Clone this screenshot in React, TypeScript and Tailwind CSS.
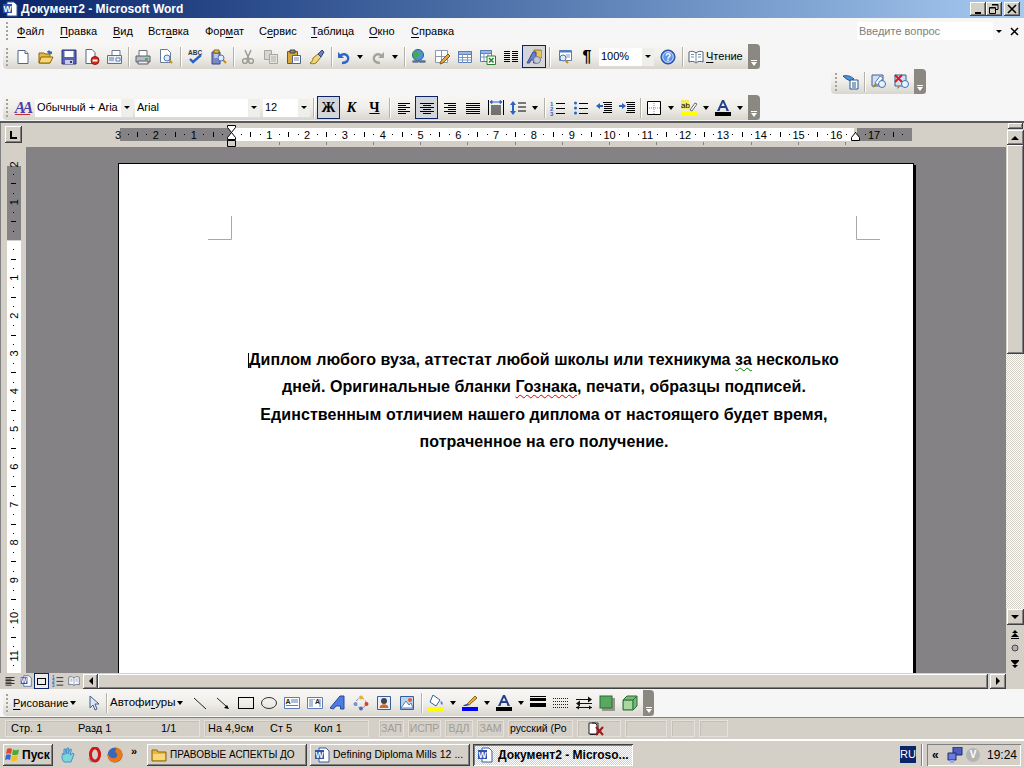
import type { ReactNode } from "react";

const raised =
  "shadow-[inset_-1px_-1px_0_#404040,inset_1px_1px_0_#ffffff,inset_-2px_-2px_0_#808080]";
const sunken =
  "shadow-[inset_1px_1px_0_#808080,inset_-1px_-1px_0_#ffffff]";
const checker =
  "bg-[repeating-conic-gradient(#ffffff_0_25%,#d4d0c8_0_50%)] bg-[length:2px_2px]";
const bar = "bg-gradient-to-b from-[#f8f7f5] via-[#efeeea] to-[#d9d6cf]";

function Ico({ children }: { children: ReactNode }) {
  return (
    <svg width="16" height="16" viewBox="0 0 16 16" className="block shrink-0">
      {children}
    </svg>
  );
}

function Lines({ rows }: { rows: [number, number, number][] }) {
  return (
    <Ico>
      {rows.map(([y, x, w], i) => (
        <rect key={i} x={x} y={y} width={w} height="1" fill="#000" />
      ))}
    </Ico>
  );
}

function Lens({ x = 10, y = 10 }: { x?: number; y?: number }) {
  return (
    <>
      <path d={`M${x + 2} ${y + 2}l3 3`} stroke="#c98a20" strokeWidth="2" />
      <circle cx={x} cy={y} r="3" fill="#dcecfb" stroke="#4a78b8" />
    </>
  );
}

const icons: Record<string, ReactNode> = {
  new: (
    <Ico>
      <path d="M3 1.5h7l3 3v10H3z" fill="#fff" stroke="#54658c" />
      <path d="M10 1.5v3h3" fill="#dfe6f2" stroke="#54658c" />
    </Ico>
  ),
  open: (
    <Ico>
      <path d="M1 4h5l1 1h5v9H1z" fill="#e8b840" stroke="#8a6410" />
      <path d="M3 8h12l-3 6H1z" fill="#f8d870" stroke="#8a6410" />
      <path d="M9 3c1-2 3-2 4 0l1-1v3h-3z" fill="#3a6cc0" />
    </Ico>
  ),
  save: (
    <Ico>
      <path d="M1 1h14v14H1z" fill="#5a62b4" stroke="#2e3478" />
      <path d="M3.5 2h9v6h-9z" fill="#fff" />
      <path d="M4 11h8v4H4z" fill="#c9cce8" />
      <path d="M9 12h2v2H9z" fill="#2e3478" />
    </Ico>
  ),
  perm: (
    <Ico>
      <path d="M2 .5h6l3 3v11H2z" fill="#fff" stroke="#54658c" />
      <circle cx="11" cy="11.5" r="4" fill="#d8281c" stroke="#8c1810" />
      <path d="M8.5 10.5h5v2h-5z" fill="#fff" />
    </Ico>
  ),
  mail: (
    <Ico>
      <path d="M5 1.5h8v5H5z" fill="#fff" stroke="#6b7b96" />
      <path d="M.5 6.5h14v8H.5z" fill="#e8edf4" stroke="#5f708c" />
      <path d="M2 9h5M2 11h5M9 9h4v3H9z" stroke="#5a7cb4" fill="#fff" />
    </Ico>
  ),
  print: (
    <Ico>
      <path d="M4 1.5h8v6H4z" fill="#fff" stroke="#6b7280" />
      <path d="M1 7h14v6H1z" fill="#b8bcc4" stroke="#59606c" />
      <path d="M3 12h10v3H3z" fill="#e8e8e8" stroke="#59606c" />
      <rect x="10" y="9" width="3" height="2" fill="#28c838" />
    </Ico>
  ),
  preview: (
    <Ico>
      <path d="M2.5 .5h7l3 3v10h-10z" fill="#fff" stroke="#6b7b96" />
      <Lens x={9} y={9} />
    </Ico>
  ),
  spell: (
    <Ico>
      <text x="0" y="5.5" fontSize="6.5" fontWeight="700" fontFamily="Liberation Sans, sans-serif" fill="#333">ABC</text>
      <path d="M2 10l3 3 8-7" fill="none" stroke="#2a62c8" strokeWidth="2.4" />
    </Ico>
  ),
  research: (
    <Ico>
      <path d="M1 3h8v12H1z" fill="#7a88c8" stroke="#3c4688" />
      <path d="M3 1h5v3H3z" fill="#e8c050" stroke="#806010" />
      <path d="M3 6h4M3 8h4" stroke="#fff" />
      <Lens x={10} y={9} />
    </Ico>
  ),
  cut: (
    <Ico>
      <path d="M5 1l4 9M11 1L7 10" stroke="#9a9a94" strokeWidth="1.5" fill="none" />
      <circle cx="5" cy="12" r="2.4" fill="none" stroke="#9a9a94" strokeWidth="1.4" />
      <circle cx="11" cy="12" r="2.4" fill="none" stroke="#9a9a94" strokeWidth="1.4" />
    </Ico>
  ),
  copy: (
    <Ico>
      <path d="M1.5 1.5h7v9h-7z" fill="#d8d6d0" stroke="#a8a6a0" />
      <path d="M6.5 5.5h8v9h-8z" fill="#e4e2dc" stroke="#a8a6a0" />
      <path d="M8 8h5M8 10h5M8 12h5" stroke="#b4b2ac" />
    </Ico>
  ),
  paste: (
    <Ico>
      <path d="M1.5 2.5h10v12h-10z" fill="#d8a838" stroke="#7c5810" />
      <path d="M4 1h5v3H4z" fill="#888" stroke="#444" />
      <path d="M6.5 6.5h8v8h-8z" fill="#fff" stroke="#54658c" />
      <path d="M8 9h5M8 11h5" stroke="#7488b0" />
    </Ico>
  ),
  brush: (
    <Ico>
      <path d="M9 5l3 3-5 6c-2 1-5 1-6 0 2-1 3-3 3-5z" fill="#f0d878" stroke="#8c7420" />
      <path d="M9 5l4-4 2 2-3 5z" fill="#6a7cc0" stroke="#38487c" />
    </Ico>
  ),
  undo: (
    <Ico>
      <path d="M6 14c5 0 7-3 6-6s-5-4-8-1" fill="none" stroke="#2f64c8" strokeWidth="2.4" />
      <path d="M2 3v6h6z" fill="#2f64c8" />
    </Ico>
  ),
  redo: (
    <Ico>
      <path d="M10 14c-5 0-7-3-6-6s5-4 8-1" fill="none" stroke="#a4a39e" strokeWidth="2.4" />
      <path d="M14 3v6H8z" fill="#a4a39e" />
    </Ico>
  ),
  link: (
    <Ico>
      <circle cx="7" cy="6" r="5.5" fill="#4c94d8" stroke="#2a5c98" />
      <path d="M4 2c2 0 3 1 4 3s-2 3-3 5c-2-1-3-3-3-4s1-3 2-4zM9 2l2 2-1 2z" fill="#3fae48" />
      <path d="M2.5 12.5h4M9 12.5h4.5" stroke="#5f6f8f" strokeWidth="2.6" strokeLinecap="round" fill="none" />
    </Ico>
  ),
  tb: (
    <Ico>
      <path d="M1.5 1.5h12v12h-12zM1.5 7.5h12M7.5 1.5v12" fill="#fff" stroke="#8c98ac" />
      <path d="M6 15l1-3 7-7 2 2-7 7z" fill="#e8a838" stroke="#8a5c10" />
    </Ico>
  ),
  table: (
    <Ico>
      <path d="M1.5 2.5h13v11h-13z" fill="#fff" stroke="#5c7cb8" />
      <path d="M1.5 2.5h13v3h-13z" fill="#9cb6e0" stroke="#5c7cb8" />
      <path d="M1.5 8.5h13M1.5 11h13M5.5 5v9M10.5 5v9" stroke="#7c98c8" />
    </Ico>
  ),
  excel: (
    <Ico>
      <path d="M.5 1.5h11v11H.5z" fill="#fff" stroke="#5c7cb8" />
      <path d="M.5 1.5h11v3H.5z" fill="#9cb6e0" stroke="#5c7cb8" />
      <path d="M4 4v8M8 4v8M1 8h10" stroke="#7c98c8" />
      <path d="M7 7h8.5v8.5H7z" fill="#fff" stroke="#2c7c30" />
      <path d="M9 9l4.500 4.500M13.500 9L9 13.500" stroke="#1c8c28" strokeWidth="1.600" />
    </Ico>
  ),
  cols: <Lines rows={[[2, 1, 6], [4, 1, 6], [6, 1, 6], [8, 1, 6], [10, 1, 6], [12, 1, 6], [2, 9, 6], [4, 9, 6], [6, 9, 6], [8, 9, 6], [10, 9, 6], [12, 9, 6]]} />,
  drawing: (
    <Ico>
      <path d="M8 1h6l2 1v6l-2 2H8z" fill="#e8c458" stroke="#94781c" />
      <path d="M1 14L7 3h3v11H7.500V11H5l-1.500 3z" fill="#6a7cd0" stroke="#39488c" />
      <circle cx="11" cy="11" r="3.500" fill="#c4c8d8" stroke="#777e98" />
    </Ico>
  ),
  docmap: (
    <Ico>
      <path d="M2.500 1.500h12v10h-12z" fill="#fff" stroke="#5c7cb8" />
      <path d="M2.500 1.500h12v2h-12z" fill="#4c7cc8" />
      <path d="M9 6h4M9 8h4" stroke="#7c98c8" />
      <Lens x={6} y={9} />
    </Ico>
  ),
  help: (
    <Ico>
      <circle cx="8" cy="8" r="7" fill="#3a74d8" stroke="#1c3c90" />
      <circle cx="8" cy="8" r="5.300" fill="#5a94ec" stroke="#d4e4fc" />
      <text x="8" y="11.500" textAnchor="middle" fontSize="10" fontWeight="700" fontFamily="Liberation Sans, sans-serif" fill="#fff">?</text>
    </Ico>
  ),
  book: (
    <Ico>
      <path d="M8 4C6 2 3 2 1 3v10c2-1 5-1 7 1 2-2 5-2 7-1V3c-2-1-5-1-7 1z" fill="#fff" stroke="#4c5c78" />
      <path d="M8 4v10M3 5.500h3M3 8h3M10 5.500h3M10 8h3" stroke="#7488a8" />
    </Ico>
  ),
  aleft: <Lines rows={[[3, 2, 12], [5, 2, 8], [7, 2, 12], [9, 2, 8], [11, 2, 12], [13, 2, 8]]} />,
  acenter: <Lines rows={[[3, 1, 14], [5, 4, 8], [7, 1, 14], [9, 4, 8], [11, 1, 14], [13, 4, 8]]} />,
  aright: <Lines rows={[[3, 2, 12], [5, 6, 8], [7, 2, 12], [9, 6, 8], [11, 2, 12], [13, 6, 8]]} />,
  ajust: <Lines rows={[[3, 1, 14], [5, 1, 14], [7, 1, 14], [9, 1, 14], [11, 1, 14], [13, 1, 14]]} />,
  adist: (
    <Ico>
      <path d="M.5 0v15M15.500 0v15" stroke="#000" />
      <path d="M2 2h12M2 2l2-1.500v3zM14 2l-2-1.500v3z" stroke="#2a62c8" fill="#2a62c8" />
      <path d="M3 6h10M3 8h10M3 10h10M3 12h10M3 14h10" stroke="#000" />
    </Ico>
  ),
  spacing: (
    <Ico>
      <path d="M3 1l3 4H4v6h2l-3 4-3-4h2V5H0z" fill="#2a62c8" />
      <path d="M8 3h8M8 7h8M8 11h8" stroke="#000" />
    </Ico>
  ),
  num: (
    <Ico>
      <text x="0" y="5.500" fontSize="6" fontWeight="700" fontFamily="Liberation Sans, sans-serif" fill="#2a62c8">1</text>
      <text x="0" y="10.500" fontSize="6" fontWeight="700" fontFamily="Liberation Sans, sans-serif" fill="#2a62c8">2</text>
      <text x="0" y="15.500" fontSize="6" fontWeight="700" fontFamily="Liberation Sans, sans-serif" fill="#2a62c8">3</text>
      <path d="M6 3.500h9M6 8.500h9M6 13.500h9" stroke="#000" />
    </Ico>
  ),
  bull: (
    <Ico>
      <circle cx="2.500" cy="3" r="1.500" fill="#2a62c8" />
      <circle cx="2.500" cy="8" r="1.500" fill="#2a62c8" />
      <circle cx="2.500" cy="13" r="1.500" fill="#2a62c8" />
      <path d="M6 3.500h9M6 8.500h9M6 13.500h9" stroke="#000" />
    </Ico>
  ),
  dec: (
    <Ico>
      <path d="M0 6l4-3v2h3v2H4v2z" fill="#2a62c8" />
      <path d="M7 2.500h9M8 4.500h8M8 6.500h8M8 8.500h8M8 10.500h8M7 12.500h9" stroke="#000" />
    </Ico>
  ),
  inc: (
    <Ico>
      <path d="M7 6L3 3v2H0v2h3v2z" fill="#2a62c8" />
      <path d="M7 2.500h9M8 4.500h8M8 6.500h8M8 8.500h8M8 10.500h8M7 12.500h9" stroke="#000" />
    </Ico>
  ),
  border: (
    <Ico>
      <path d="M1.500 1.500h13v13h-13z" fill="#fff" stroke="#000" />
      <path d="M8 3v11M3 8h11" stroke="#888" strokeDasharray="1 1" />
    </Ico>
  ),
  hl: (
    <Ico>
      <rect x="0" y="0" width="8" height="9" fill="#f4ec60" />
      <text x="0" y="8" fontSize="8" fontFamily="Liberation Sans, sans-serif" fill="#000">ab</text>
      <path d="M9 10l5-7 2 1-5 7z" fill="#fff" stroke="#666" />
      <rect x="0" y="12" width="16" height="4" fill="#ffff00" />
    </Ico>
  ),
  fcolor: (
    <Ico>
      <path d="M2 11L7 0h2l5 11h-2.500l-1-3H5.500l-1 3zM6.300 6h3.400L8 2.500z" fill="#24408c" />
      <rect x="0" y="12" width="16" height="4" fill="#000" />
    </Ico>
  ),
  toolA: (
    <Ico>
      <path d="M1 1h11v11H1z" fill="#cfe0f4" stroke="#34609c" />
      <path d="M4 9l5-7 3 2-5 7z" fill="#fff" stroke="#5c7cb8" />
      <path d="M4 9l-2 5 4-3z" fill="#b07820" />
      <circle cx="11" cy="10" r="3.500" fill="#eaf4ff" stroke="#3a70b4" />
    </Ico>
  ),
  toolB: (
    <Ico>
      <path d="M1 1h11v11H1z" fill="#cfe0f4" stroke="#34609c" />
      <path d="M1 1l7 7M8 1L1 8" stroke="#e01818" strokeWidth="2" />
      <path d="M4 12l-1 3 3-2z" fill="#b07820" />
      <circle cx="11" cy="10" r="3.500" fill="#eaf4ff" stroke="#3a70b4" />
    </Ico>
  ),
  toolC: (
    <Ico>
      <path d="M0 2c4-1 8 0 11 3l-3 2C5 6 3 5 0 2z" fill="#4c94d8" stroke="#24568f" />
      <path d="M7 6h8v9H7z" fill="#fff" stroke="#24568f" />
      <path d="M9 9h4M9 11h4M9 13h4" stroke="#24568f" />
    </Ico>
  ),
  pointer: (
    <Ico>
      <path d="M4 1v12l3-3 2 5 2-1-2-5h4z" fill="#dbe6f7" stroke="#465e8c" />
    </Ico>
  ),
  line: (
    <Ico>
      <path d="M2 3l12 11" stroke="#222" />
    </Ico>
  ),
  arrow: (
    <Ico>
      <path d="M2 3l9 8" stroke="#222" />
      <path d="M14 14l-5-1 3-3z" fill="#000" />
    </Ico>
  ),
  rect: (
    <Ico>
      <rect x=".5" y="2.500" width="15" height="11" fill="none" stroke="#000" />
    </Ico>
  ),
  oval: (
    <Ico>
      <ellipse cx="8" cy="8" rx="7.500" ry="5.500" fill="none" stroke="#333" />
    </Ico>
  ),
  textbox: (
    <Ico>
      <path d="M.5 2.500h15v11H.5z" fill="#fff" stroke="#5c7cb8" />
      <text x="1.500" y="9" fontSize="7" fontWeight="700" fontFamily="Liberation Sans, sans-serif" fill="#222">A</text>
      <path d="M7 5h7M7 7h7M2 10.500h12" stroke="#5c7cb8" />
    </Ico>
  ),
  vtext: (
    <Ico>
      <path d="M.5 2.500h15v11H.5z" fill="#fff" stroke="#5c7cb8" />
      <text x="8" y="9" fontSize="7" fontWeight="700" fontFamily="Liberation Sans, sans-serif" fill="#222">A</text>
      <path d="M3 4v8M5 4v8M7 4v1M13 4v8" stroke="#5c7cb8" />
    </Ico>
  ),
  wordart: (
    <Ico>
      <path d="M0 13L10 1h4v13h-3.500v-3H6l-2.500 3z" fill="#4c7ce0" stroke="#2448a0" />
    </Ico>
  ),
  diagram: (
    <Ico>
      <path d="M8 3a5 5 0 0 1 5 5 5 5 0 0 1-5 5 5 5 0 0 1-5-5 5 5 0 0 1 5-5z" fill="none" stroke="#888" strokeDasharray="3 2" />
      <circle cx="8" cy="2.500" r="2" fill="#e8b030" />
      <circle cx="13.500" cy="9" r="2" fill="#d84028" />
      <circle cx="8" cy="13.500" r="2" fill="#5a64c4" />
      <circle cx="2.500" cy="9" r="2" fill="#6c94d8" />
    </Ico>
  ),
  clip: (
    <Ico>
      <path d="M1.500 1.500h13v13h-13z" fill="#e8eefa" stroke="#34609c" />
      <circle cx="8" cy="6" r="3" fill="#444" />
      <path d="M3.500 13c0-5 9-5 9 0z" fill="#d06828" />
    </Ico>
  ),
  pic: (
    <Ico>
      <path d="M1.500 1.500h13v13h-13z" fill="#bcd4f0" stroke="#34609c" />
      <circle cx="11" cy="5" r="2" fill="#e85c30" />
      <path d="M2 13l5-7 3 4 2-2 2 5z" fill="#fff" stroke="#5c7cb8" />
    </Ico>
  ),
  fill: (
    <Ico>
      <path d="M5 0l7 5-4 6-6-4z" fill="#fff" stroke="#3c5c98" />
      <path d="M13 6c2 1 2 3 1 4-1-1-2-2-1-4z" fill="#3c78d8" />
      <rect x="0" y="12" width="16" height="4" fill="#ffff00" />
    </Ico>
  ),
  pen: (
    <Ico>
      <path d="M5 9L13 1l2 2-8 7z" fill="#e8b040" stroke="#8a6410" />
      <path d="M5 9c-2 0-3 1-4 2 2 0 5 0 6-1z" fill="#2a48c8" />
      <rect x="0" y="12" width="16" height="4" fill="#0000ff" />
    </Ico>
  ),
  lstyle: (
    <Ico>
      <rect x="0" y="3" width="16" height="3" fill="#000" />
      <rect x="0" y="8" width="16" height="4" fill="#000" />
      <rect x="0" y="1" width="16" height="1" fill="#000" />
    </Ico>
  ),
  dstyle: (
    <Ico>
      <path d="M0 3.500h16M0 6.500h16M0 9.500h16M0 12.500h16" stroke="#222" strokeDasharray="1 1" />
    </Ico>
  ),
  astyle: (
    <Ico>
      <path d="M0 4.500h13M3 8.500h13M0 12.500h16" stroke="#111" />
      <path d="M16 4.500l-4-3v6zM0 8.500l4-3v6zM0 12.500l3-2v4zM16 12.500l-3-2v4z" fill="#111" />
    </Ico>
  ),
  shadow: (
    <Ico>
      <rect x="3" y="3" width="13" height="13" fill="#98968e" />
      <rect x="1" y="1" width="12" height="12" fill="#58a860" stroke="#2c6c34" />
    </Ico>
  ),
  d3: (
    <Ico>
      <path d="M1 5l4-4h10v10l-4 4H1z" fill="#78b878" stroke="#2c6c34" />
      <path d="M1 5h10v10M11 5l4-4" fill="none" stroke="#2c6c34" />
      <path d="M2 6h8v8H2z" fill="#a8d8a0" />
    </Ico>
  ),
  word: (
    <Ico>
      <path d="M5 1h7l3 3v11H5z" fill="#fff" stroke="#3c5c98" />
      <path d="M1 3h9v9H1z" fill="#2c54b0" />
      <text x="5.500" y="10.500" textAnchor="middle" fontSize="8.500" fontWeight="700" fontFamily="Liberation Sans, sans-serif" fill="#fff">W</text>
    </Ico>
  ),
  folder: (
    <Ico>
      <path d="M1 3h5l1 2h8v9H1z" fill="#e8b838" stroke="#8a6410" />
      <path d="M2 7h12v6H2z" fill="#f8d878" />
    </Ico>
  ),
  flag: (
    <Ico>
      <path d="M2 2c2-1 3-1 5 0l-1 5c-2-1-3-1-5 0z" fill="#e04820" />
      <path d="M8 2.500c2 1 3 1 6 0l-1 5c-3 1-4 1-6 0z" fill="#50a830" />
      <path d="M1 8c2-1 3-1 5 0l-1 5c-2-1-3-1-5 0z" fill="#3868d0" />
      <path d="M7 8.500c2 1 3 1 6 0l-1 5c-3 1-4 1-6 0z" fill="#f0c020" />
    </Ico>
  ),
  hand: (
    <Ico>
      <path d="M4 15C1 11 2 8 3 6l1 2 0-6 1.500 0 .5 5 1-6 1.500 0L8 7l2-5 1.500 .5L10 8l3-2 1 1-3 8z" fill="#7cd8d8" stroke="#4c8cc8" />
    </Ico>
  ),
  opera: (
    <Ico>
      <path d="M2 12l3-3 3 4-3 3z" fill="#a8a8a8" />
      <ellipse cx="9" cy="7.500" rx="4.500" ry="6.500" fill="none" stroke="#d01818" strokeWidth="3" />
    </Ico>
  ),
  fox: (
    <Ico>
      <circle cx="8" cy="8" r="7.500" fill="#3868b8" />
      <path d="M8 .5c5 0 8 4 7.500 8S11 15.500 7 15.500 0 11 1 7c1 3 4 5 7 4s3-5 0-6c1-2 2-3 0-4.500z" fill="#e87818" />
    </Ico>
  ),
  net: (
    <Ico>
      <path d="M6 0h9v8H6z" fill="#4c5cc0" stroke="#1c2c70" />
      <path d="M1 6h8v7H1z" fill="#6c7cd8" stroke="#1c2c70" />
      <path d="M3 13h4v3H3z" fill="#9ca8e8" />
    </Ico>
  ),
  spellx: (
    <Ico>
      <path d="M1 2h6l2 2v9H1zM4 2h6v10" fill="#fff" stroke="#222" />
      <path d="M2 13.500h8" stroke="#222" />
      <path d="M8 6l7 8M15 6l-7 8" stroke="#a01818" strokeWidth="2" />
    </Ico>
  ),
};

function Btn({ name, w = "w-[23px]", active }: { name: string; w?: string; active?: boolean }) {
  return (
    <div
      className={`flex h-[23px] shrink-0 items-center justify-center ${w} ${
        active ? "border border-[#0a246a] bg-[#d4d5d8]" : ""
      }`}
    >
      {icons[name]}
    </div>
  );
}

function Sep({ w = "w-[6px]" }: { w?: string }) {
  return (
    <div className={`flex h-[20px] shrink-0 justify-center ${w}`}>
      <div className="w-px bg-[#b4b1a8] shadow-[1px_0_0_#ffffff]" />
    </div>
  );
}

function Caret({ w = "w-[12px]" }: { w?: string }) {
  return (
    <div className={`flex h-[23px] shrink-0 items-center justify-center ${w}`}>
      <div className="h-0 w-0 border-x-[3.5px] border-t-[4px] border-x-transparent border-t-black" />
    </div>
  );
}

function Grip() {
  return (
    <div className="flex h-[19px] w-[6px] shrink-0 flex-col items-center justify-center gap-[2px]">
      {[0, 1, 2, 3, 4].map((i) => (
        <div key={i} className="h-[2px] w-[2px] bg-[#a5a299]" />
      ))}
    </div>
  );
}

function BarEnd({ w = "w-[12px]" }: { w?: string }) {
  return (
    <div className={`ml-auto flex h-full flex-col items-center justify-end rounded-r-[4px] bg-[#8a8880] pb-[3px] ${w}`}>
      <div className="mb-[1px] h-px w-[6px] bg-white" />
      <div className="h-0 w-0 border-x-[3px] border-t-[4px] border-x-transparent border-t-white" />
    </div>
  );
}

function Combo({ text, w }: { text: string; w: string }) {
  return (
    <div className={`flex h-[18px] shrink-0 items-center bg-white ${w}`}>
      <div className="min-w-0 flex-1 overflow-hidden whitespace-nowrap pl-[2px] text-[11px] text-black">{text}</div>
      <div className="flex h-full w-[12px] shrink-0 items-center justify-center bg-[#eeeeea]">
        <div className="h-0 w-0 border-x-[3px] border-t-[3px] border-x-transparent border-t-black" />
      </div>
    </div>
  );
}

const menu: [string, string, string, string][] = [
  ["", "Ф", "айл", "w-[43px]"],
  ["", "П", "равка", "w-[53px]"],
  ["", "В", "ид", "w-[35px]"],
  ["Вст", "а", "вка", "w-[57px]"],
  ["Фор", "м", "ат", "w-[54px]"],
  ["С", "е", "рвис", "w-[52px]"],
  ["", "Т", "аблица", "w-[58px]"],
  ["", "О", "кно", "w-[42px]"],
  ["", "С", "правка", "w-[60px]"],
];

function WinBtn({ children }: { children: ReactNode }) {
  return (
    <div className={`flex h-[14px] w-[16px] items-center justify-center bg-[#d4d0c8] ${raised}`}>
      {children}
    </div>
  );
}

function TitleBar() {
  return (
    <div className="flex h-[18px] items-center bg-gradient-to-r from-[#0a246a] to-[#a6caf0] px-[2px]">
      {icons.word}
      <span className="ml-[3px] text-[12px] font-bold text-white">Документ2 - Microsoft Word</span>
      <div className="ml-auto flex items-center">
        <WinBtn>
          <div className="mt-[7px] h-[2px] w-[6px] bg-black" />
        </WinBtn>
        <WinBtn>
          <svg width="10" height="10" viewBox="0 0 10 10">
            <path d="M3 .5h6v5H7M.5 3.500h6v6h-6z" fill="none" stroke="#000" />
            <path d="M3 1h6M1 4h5" stroke="#000" />
          </svg>
        </WinBtn>
        <div className="w-[2px]" />
        <WinBtn>
          <svg width="10" height="10" viewBox="0 0 10 10">
            <path d="M1 1l8 8M9 1L1 9" stroke="#000" strokeWidth="1.600" />
          </svg>
        </WinBtn>
        <div className="w-[2px]" />
      </div>
    </div>
  );
}

function MenuBar() {
  return (
    <div className="flex h-[26px] items-center pl-[4px] text-[11px] text-black">
      <Grip />
      <div className="w-[7px]" />
      {menu.map(([a, u, b, w]) => (
        <div key={u + b} className={`${w} shrink-0`}>
          {a}
          <span className="underline underline-offset-2">{u}</span>
          {b}
        </div>
      ))}
      <div className="ml-auto mr-[5px] flex h-[18px] w-[148px] items-center bg-white pl-[2px] text-[11px] text-[#808080]">
        Введите вопрос
        <div className="ml-auto flex h-full w-[12px] items-center justify-center bg-[#f6f6f6]">
          <div className="h-0 w-0 border-x-[3px] border-t-[3px] border-x-transparent border-t-black" />
        </div>
      </div>
      <svg width="9" height="9" viewBox="0 0 9 9" className="mr-[5px]">
        <path d="M1 1l7 7M8 1L1 8" stroke="#000" strokeWidth="1.500" />
      </svg>
    </div>
  );
}

function StandardBar() {
  return (
    <div className={`ml-[3px] flex h-[25px] w-[757px] items-center rounded-l-[4px] pl-[1px] ${bar}`}>
      <Grip />
      <div className="w-[1px]" />
      <Btn name="new" />
      <Btn name="open" />
      <Btn name="save" />
      <Btn name="perm" />
      <Btn name="mail" />
      <Sep w="w-[5px]" />
      <Btn name="print" />
      <Btn name="preview" />
      <Sep w="w-[7px]" />
      <Btn name="spell" />
      <Btn name="research" />
      <Sep />
      <Btn name="cut" />
      <Btn name="copy" />
      <Btn name="paste" />
      <Btn name="brush" />
      <Sep />
      <Btn name="undo" w="w-[20px]" />
      <Caret />
      <Btn name="redo" />
      <Caret />
      <Sep />
      <Btn name="link" />
      <Btn name="tb" />
      <Btn name="table" />
      <Btn name="excel" />
      <Btn name="cols" />
      <Btn name="drawing" w="w-[24px]" active />
      <Sep w="w-[7px]" />
      <Btn name="docmap" />
      <div className="flex h-[23px] w-[22px] shrink-0 items-center justify-center text-[16px] font-bold">¶</div>
      <div className="w-[1px]" />
      <Combo text="100%" w="w-[55px]" />
      <div className="w-[2px]" />
      <Btn name="help" />
      <Sep />
      <Btn name="book" w="w-[21px]" />
      <div className="w-[39px] shrink-0 text-[11px]">
        <span className="underline underline-offset-2">Ч</span>тение
      </div>
      <BarEnd />
    </div>
  );
}

function FloatingBar() {
  return (
    <div className="flex h-[26px] justify-end pr-[98px]">
      <div className={`flex h-[25px] w-[95px] items-center rounded-l-[4px] pl-[2px] ${bar}`}>
        <Grip />
        <Btn name="toolC" />
        <Sep w="w-[5px]" />
        <Btn name="toolA" />
        <Btn name="toolB" />
        <BarEnd />
      </div>
    </div>
  );
}

function FontBtn({ children, active, className }: { children: ReactNode; active?: boolean; className?: string }) {
  return (
    <div
      className={`flex h-[23px] w-[23px] shrink-0 items-center justify-center font-['Liberation_Serif',serif] text-[14px] font-bold ${
        active ? "border border-[#0a246a] bg-[#d4d5d8]" : ""
      } ${className ?? ""}`}
    >
      {children}
    </div>
  );
}

function FormatBar() {
  return (
    <div className={`ml-[3px] flex h-[25px] w-[757px] items-center rounded-l-[4px] pl-[1px] ${bar}`}>
      <Grip />
      <div className="w-[1px]" />
      <div className="flex h-[23px] w-[23px] shrink-0 items-center justify-center font-['Liberation_Serif',serif] text-[16px] font-bold italic leading-none tracking-[-3px] text-[#4c3ca8] underline decoration-[#c03030]">
        AA
      </div>
      <div className="w-[1px]" />
      <Combo text="Обычный + Aria" w="w-[98px]" />
      <div className="w-[2px]" />
      <Combo text="Arial" w="w-[125px]" />
      <div className="w-[3px]" />
      <Combo text="12" w="w-[47px]" />
      <Sep w="w-[7px]" />
      <FontBtn active>Ж</FontBtn>
      <FontBtn className="italic">К</FontBtn>
      <FontBtn className="underline">Ч</FontBtn>
      <Sep />
      <Btn name="aleft" />
      <Btn name="acenter" active />
      <Btn name="aright" />
      <Btn name="ajust" />
      <Btn name="adist" />
      <Btn name="spacing" w="w-[22px]" />
      <Caret />
      <Sep />
      <Btn name="num" w="w-[22px]" />
      <Btn name="bull" />
      <Btn name="dec" />
      <Btn name="inc" />
      <Sep w="w-[5px]" />
      <Btn name="border" w="w-[22px]" />
      <Caret />
      <Btn name="hl" />
      <Caret w="w-[11px]" />
      <Btn name="fcolor" />
      <Caret w="w-[11px]" />
      <BarEnd />
    </div>
  );
}

const CM = 37.8;

function HRuler() {
  const marks = [];
  for (let q = -12; q <= 71; q++) {
    const x = 231.5 + (q * CM) / 4;
    if (q % 4 === 0) {
      if (q !== 0)
        marks.push(
          <text key={q} x={x} y="139" textAnchor="middle" fontSize="11" fill="#000">
            {Math.abs(q / 4)}
          </text>,
        );
    } else if (Math.abs(q % 2) === 1) {
      marks.push(<rect key={q} x={Math.round(x)} y="134" width="1" height="1" fill="#000" />);
    } else {
      marks.push(<rect key={q} x={Math.round(x)} y="132" width="1" height="5" fill="#000" />);
    }
  }
  const tabs = [279, 326, 373, 420, 467, 515, 562, 609, 656, 703, 751, 798, 845];
  return (
    <svg width="1000" height="24" viewBox="0 123 1000 24" className="block shrink-0">
      <rect x="120" y="128" width="111" height="13" fill="#848284" />
      <rect x="231" y="128" width="623" height="13" fill="#fff" />
      <rect x="857" y="128" width="55" height="13" fill="#848284" />
      {marks}
      {tabs.map((x) => (
        <rect key={x} x={x} y="142" width="1" height="3" fill="#848284" />
      ))}
      <path d="M227.500 125.500h8v2l-4 5 4 5v2h-8v-2l4-5-4-5z" fill="#fff" stroke="#000" />
      <path d="M227.500 140.500h8v6h-8z" fill="#d4d0c8" stroke="#000" />
      <path d="M851.500 140.500v-3l4-5 4 5v3z" fill="#fff" stroke="#000" />
    </svg>
  );
}

function VRuler() {
  const marks = [];
  for (let q = -8; q <= 46; q++) {
    const y = 240 + (q * CM) / 4;
    if (q % 4 === 0) {
      if (q !== 0) {
        const label = Math.abs(q / 4);
        marks.push(
          <text key={q} x="14" y={y} textAnchor="middle" fontSize="11" fill="#000" transform={`rotate(-90 14 ${y}) translate(0 4)`}>
            {label}
          </text>,
        );
      }
    } else if (Math.abs(q % 2) === 1) {
      marks.push(<rect key={q} x="13" y={Math.round(y)} width="1" height="1" fill="#000" />);
    } else {
      marks.push(<rect key={q} x="11" y={Math.round(y)} width="5" height="1" fill="#000" />);
    }
  }
  return (
    <svg width="26" height="526" viewBox="0 147 26 526" className="block shrink-0">
      <rect x="7" y="166" width="14" height="74" fill="#848284" />
      <rect x="7" y="241" width="14" height="432" fill="#fff" />
      {marks}
    </svg>
  );
}

function VScroll() {
  return (
    <div className="flex h-[550px] w-[18px] shrink-0 flex-col items-center bg-[#d4d0c8]">
      <div className={`h-[6px] w-[15px] shrink-0 bg-[#d4d0c8] ${raised}`} />
      <div className={`mt-px flex h-[15px] w-[17px] shrink-0 items-center justify-center bg-[#d4d0c8] ${raised}`}>
        <div className="h-0 w-0 border-x-[4px] border-b-[4px] border-x-transparent border-b-black" />
      </div>
      <div className={`h-[209px] w-[17px] shrink-0 bg-[#d4d0c8] ${raised}`} />
      <div className={`h-[255px] w-[18px] shrink-0 ${checker}`} />
      <div className={`flex h-[16px] w-[17px] shrink-0 items-center justify-center bg-[#d4d0c8] ${raised}`}>
        <div className="h-0 w-0 border-x-[4px] border-t-[4px] border-x-transparent border-t-black" />
      </div>
      <svg width="18" height="48" viewBox="0 0 18 48" className="block shrink-0">
        <path d="M9 5l3 3H6zM9 8l4 4H5z" fill="#000" />
        <path d="M5 13.500h8" stroke="#000" />
        <circle cx="9" cy="23" r="3" fill="#b0aeb0" stroke="#444" />
        <path d="M5 35.500h8" stroke="#000" />
        <path d="M5 36h8l-4 4zM6 40h6l-3 3z" fill="#000" />
      </svg>
    </div>
  );
}

function Page() {
  return (
    <div className="relative h-[700px] w-[796px] border border-black bg-white pl-[113px] pr-[57px] pt-[182px] font-['Liberation_Sans',sans-serif] text-[16px] font-bold leading-[27.3px] tracking-[0.06px] text-black shadow-[2px_2px_0_#000]">
      <svg width="794" height="100" viewBox="119 164 794 100" className="absolute left-0 top-0">
        <path d="M231.500 216v23.500H208M856.500 216v23.500H880" fill="none" stroke="#a8a8a8" />
      </svg>
      <div className="flex flex-col items-center whitespace-nowrap">
        <div className="relative">
          <span className="absolute -left-px top-[7px] h-[15px] w-px bg-black" />
          Диплом любого вуза, аттестат любой школы или техникума{" "}
          <span className="underline decoration-[#008000] decoration-wavy decoration-1 underline-offset-2">за</span> несколько
        </div>
        <div>
          дней. Оригинальные бланки{" "}
          <span className="underline decoration-[#e00000] decoration-wavy decoration-1 underline-offset-2">Гознака</span>, печати, образцы подписей.
        </div>
        <div>Единственным отличием нашего диплома от настоящего будет время,</div>
        <div>потраченное на его получение.</div>
      </div>
    </div>
  );
}

function Workspace() {
  return (
    <div className="flex h-[526px] overflow-hidden">
      <div className="w-[26px] shrink-0 border-l border-[#808080] bg-[#d4d0c8]">
        <div className="-ml-px">
          <VRuler />
        </div>
      </div>
      <div className="min-w-0 flex-1 overflow-hidden bg-[#848284] pl-[92px] pt-4">
        <Page />
      </div>
      <div className="w-[18px] shrink-0" />
    </div>
  );
}

function Mini({ name, w }: { name: string; w: string }) {
  return (
    <div className={`flex h-[16px] items-center justify-center overflow-hidden ${w}`}>
      <div className="scale-75">{icons[name]}</div>
    </div>
  );
}

function HScroll() {
  return (
    <div className="flex h-[16px] items-center bg-[#d4d0c8] pl-[2px]">
      <div className="flex h-[16px] w-[81px] shrink-0 items-center">
        <Mini name="aleft" w="w-[16px]" />
        <Mini name="word" w="w-[16px]" />
        <div className="flex h-[16px] w-[15px] items-center justify-center border border-[#0a246a] bg-[#ececec]">
          <div className="h-[7px] w-[9px] border border-black" />
        </div>
        <Mini name="num" w="w-[17px]" />
        <Mini name="book" w="w-[15px]" />
      </div>
      <div className={`flex h-[15px] w-[15px] shrink-0 items-center justify-center ${raised}`}>
        <div className="h-0 w-0 border-y-[4px] border-r-[4px] border-y-transparent border-r-black" />
      </div>
      <div className={`h-[15px] w-[890px] shrink-0 ${raised}`} />
      <div className={`ml-[2px] flex h-[15px] w-[16px] shrink-0 items-center justify-center ${raised}`}>
        <div className="h-0 w-0 border-y-[4px] border-l-[4px] border-y-transparent border-l-black" />
      </div>
    </div>
  );
}

function DrawingBar() {
  return (
    <div className="h-[28px] bg-[#f6f6f6] pt-[1px]">
      <div className={`ml-[3px] flex h-[26px] w-[651px] items-center rounded-l-[4px] pl-[1px] ${bar}`}>
        <Grip />
        <div className="w-[3px]" />
        <div className="w-[54px] shrink-0 text-[11px]">
          <span className="underline underline-offset-2">Р</span>исование
        </div>
        <Caret w="w-[11px]" />
        <div className="w-[6px]" />
        <Btn name="pointer" w="w-[20px]" />
        <Sep w="w-[5px]" />
        <div className="ml-[1px] w-[65px] shrink-0 text-[11.5px]">
          Автофи<span className="underline underline-offset-2">г</span>уры
        </div>
        <Caret w="w-[10px]" />
        <div className="w-[3px]" />
        <Btn name="line" />
        <Btn name="arrow" />
        <Btn name="rect" />
        <Btn name="oval" />
        <Btn name="textbox" />
        <Btn name="vtext" />
        <Btn name="wordart" />
        <Btn name="diagram" />
        <Btn name="clip" />
        <Btn name="pic" />
        <Sep />
        <Btn name="fill" w="w-[24px]" />
        <Caret w="w-[10px]" />
        <Btn name="pen" />
        <Caret w="w-[11px]" />
        <Btn name="fcolor" />
        <Caret w="w-[11px]" />
        <Btn name="lstyle" />
        <Btn name="dstyle" />
        <Btn name="astyle" />
        <Btn name="shadow" />
        <Btn name="d3" />
        <BarEnd w="w-[11px]" />
      </div>
    </div>
  );
}

function Cell({ w, className, children }: { w: string; className?: string; children?: ReactNode }) {
  return (
    <div className={`flex h-[17px] shrink-0 items-center overflow-hidden whitespace-nowrap border border-[#e4e1da] shadow-[inset_1px_1px_0_#c4c0b8] ${w} ${className ?? ""}`}>
      {children}
    </div>
  );
}

function StatusBar() {
  return (
    <div className="flex h-[23px] items-center gap-[4px] border-y border-t-[#808080] border-b-white bg-[#d4d0c8] pl-[5px] text-[11px]">
      <Cell w="w-[195px]" className="pl-[5px]">
        <span className="w-[67px]">Стр. 1</span>
        <span className="w-[83px]">Разд 1</span>
        <span>1/1</span>
      </Cell>
      <Cell w="w-[165px]" className="pl-[3px]">
        <span className="w-[62px]">На 4,9см</span>
        <span className="w-[44px]">Ст 5</span>
        <span>Кол 1</span>
      </Cell>
      <div className="w-[2px]" />
      <Cell w="w-[25px]" className="justify-center text-[10.5px] text-[#a09d96]">ЗАП</Cell>
      <Cell w="w-[33px]" className="justify-center text-[10.5px] text-[#a09d96]">ИСПР</Cell>
      <Cell w="w-[28px]" className="justify-center text-[10.5px] text-[#a09d96]">ВДЛ</Cell>
      <Cell w="w-[27px]" className="justify-center text-[10.5px] text-[#a09d96]">ЗАМ</Cell>
      <Cell w="w-[65px]" className="pl-px text-[10.5px]">русский (Ро</Cell>
      <Cell w="w-[44px]" className="pl-[10px]">{icons.spellx}</Cell>
      <Cell w="w-[42px]" />
      <Cell w="w-[24px]" />
      <Cell w="w-[29px]" />
    </div>
  );
}

function TaskBtn({ icon, label, size, active }: { icon: string; label: string; size: string; active?: boolean }) {
  return (
    <div
      className={`flex h-[22px] w-[160px] shrink-0 items-center gap-[3px] pl-[4px] pr-[3px] ${size} ${
        active
          ? `font-bold ${checker} shadow-[inset_1px_1px_0_#404040,inset_-1px_-1px_0_#ffffff,inset_2px_2px_0_#808080]`
          : raised
      }`}
    >
      {icons[icon]}
      <span className={`min-w-0 whitespace-nowrap ${active ? "ml-[2px]" : ""}`}>{label}</span>
    </div>
  );
}

function Taskbar() {
  return (
    <div className="flex h-[28px] items-center border-t border-white bg-[#d4d0c8] pl-[3px] text-black">
      <div className={`flex h-[22px] w-[50px] shrink-0 items-center gap-[1px] pl-[2px] text-[12px] font-bold ${raised}`}>
        {icons.flag}
        Пуск
      </div>
      <div className="w-[7px]" />
      <div className="flex w-[71px] shrink-0 items-center">
        {icons.hand}
        <div className="w-[10px]" />
        {icons.opera}
        <div className="w-[5px]" />
        {icons.fox}
      </div>
      <div className="mb-[6px] w-[16px] shrink-0 text-[11px] font-bold">»</div>
      <TaskBtn icon="folder" size="text-[10px]" label="ПРАВОВЫЕ АСПЕКТЫ ДО" />
      <div className="w-[3px]" />
      <TaskBtn icon="word" size="text-[10.5px]" label="Defining Diploma Mills 12 ..." />
      <div className="w-[3px]" />
      <TaskBtn icon="word" size="text-[12px]" label="Документ2 - Microso..." active />
      <div className="ml-auto flex h-[17px] w-[16px] items-center justify-center bg-[#0a246a] text-[11px] text-white">RU</div>
      <div className="mx-[5px] h-[22px] w-px bg-[#808080] shadow-[1px_0_0_#ffffff]" />
      <div className={`mr-[3px] flex h-[22px] w-[94px] items-center pl-[5px] text-[12px] ${sunken}`}>
        <span className="w-[12px] font-bold">«</span>
        <div className="w-[3px]" />
        {icons.net}
        <div className="ml-[3px] flex h-[14px] w-[14px] items-center justify-center rounded-full bg-[#b4b4b4] text-[10px] font-bold text-white">V</div>
        <span className="ml-[7px]">19:24</span>
      </div>
    </div>
  );
}

export default function App() {
  return (
    <div className="h-[768px] w-[1024px] overflow-hidden bg-[#d4d0c8] font-['Liberation_Sans',sans-serif] text-black">
      <TitleBar />
      <div className="h-[105px] border-b-2 border-[#5a5a5a] bg-[#f6f6f6]">
        <MenuBar />
        <StandardBar />
        <FloatingBar />
        <FormatBar />
      </div>
      <div className="flex h-[24px]">
        <div className="relative w-[1006px] border-l border-[#808080]">
          <div className={`absolute left-[4px] top-[3px] flex h-[17px] w-[17px] items-center justify-center ${raised}`}>
            <div className="h-[8px] w-[7px] border-b-2 border-l-2 border-black" />
          </div>
          <div className="-ml-px">
            <HRuler />
          </div>
        </div>
        <VScroll />
      </div>
      <Workspace />
      <HScroll />
      <DrawingBar />
      <StatusBar />
      <Taskbar />
    </div>
  );
}
